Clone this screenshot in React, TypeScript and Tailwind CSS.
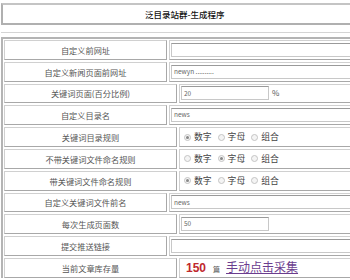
import React from "react";

const font = { fontFamily: '"Noto Sans CJK SC", "Liberation Sans", sans-serif' };

function Radio({ checked }: { checked?: boolean }) {
  return (
    <span className="inline-flex h-[7px] w-[7px] items-center justify-center rounded-full border border-[#c4c4c4] bg-[#f4f4f4]">
      {checked ? <span className="h-[3px] w-[3px] rounded-full bg-[#888]" /> : null}
    </span>
  );
}

function Radios({ value }: { value: number }) {
  const opts = ["数字", "字母", "组合"];
  return (
    <div className="flex items-center gap-[6px] pl-[3px] text-[8.8px] text-[#444]">
      {opts.map((o, i) => (
        <span key={o} className="flex items-center gap-[3px]">
          <Radio checked={i === value} />
          {o}
        </span>
      ))}
    </div>
  );
}

function Field({ value = "", short, suffix }: { value?: string; short?: boolean; suffix?: string }) {
  return (
    <div className="flex items-center">
      <div
        className={
          "flex h-[14px] items-center border border-[#c8c8c8] border-t-[#9a9a9a] bg-white pl-[2px] text-[6.5px] text-[#666] " +
          (short ? "w-[88px]" : "w-[200px]")
        }
      >
        {value}
      </div>
      {suffix ? <span className="ml-[3px] text-[8px] text-[#555]">{suffix}</span> : null}
    </div>
  );
}

type Row = { label: string; cell: React.ReactNode };

const rows: Row[] = [
  { label: "自定义前网址", cell: <Field /> },
  { label: "自定义新闻页面前网址", cell: <Field value="newyn .........." /> },
  { label: "关键词页面(百分比例)", cell: <Field value="20" short suffix="%" /> },
  { label: "自定义目录名", cell: <Field value="news" /> },
  { label: "关键词目录规则", cell: <Radios value={0} /> },
  { label: "不带关键词文件命名规则", cell: <Radios value={1} /> },
  { label: "带关键词文件命名规则", cell: <Radios value={0} /> },
  { label: "自定义关键词文件前名", cell: <Field value="news" /> },
  { label: "每次生成页面数", cell: <Field value="50" short /> },
  { label: "提交推送链接", cell: <Field /> },
  {
    label: "当前文章库存量",
    cell: (
      <div className="flex items-baseline pl-[5px]">
        <span className="text-[12px] font-bold text-[#c0282d]" style={{ fontFamily: '"Liberation Sans", sans-serif' }}>
          150
        </span>
        <span className="ml-[7px] text-[7px] text-[#555]">篇</span>
        <span className="ml-[6px] text-[12px] text-[#6b3d8f] underline">手动点击采集</span>
      </div>
    ),
  },
];

export default function App() {
  return (
    <div className="h-[280px] w-[350px] overflow-hidden bg-white" style={font}>
      <div className="w-[372px] pl-[1px] pt-[3px]">
        <div className="flex h-[22px] items-center border-2 border-[#b0b0b0] border-r-0 border-t-[#c4c4c4] pl-[142px] text-[8.5px] font-medium text-[#111]">
          泛目录站群-生成程序
        </div>
        <div className="mt-[7px] h-[1px] bg-[#d4d4d4]" />
        <div className="mt-[4px] flex flex-col gap-[2px] border-l-2 border-t-2 border-[#b4b4b4] pl-[1px] pt-[1px]">
          {rows.map((r) => (
            <div key={r.label} className="flex h-[19.8px] gap-[2px]">
              <div className="flex w-[173px] items-center justify-center border border-[#a8a8a8] border-l-[#d0d0d0] border-t-[#d0d0d0] text-[8.2px] text-[#555]">
                {r.label}
              </div>
              <div className="flex flex-1 items-center border border-[#a8a8a8] border-l-[#d0d0d0] border-t-[#d0d0d0] pl-[1px]">
                {r.cell}
              </div>
            </div>
          ))}
        </div>
      </div>
    </div>
  );
}
